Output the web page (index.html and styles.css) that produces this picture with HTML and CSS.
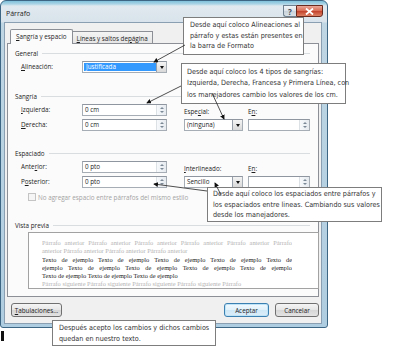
FILE: index.html
```html
<!DOCTYPE html>
<html lang="es">
<head>
  <meta charset="UTF-8">
  <title>Párrafo</title>
  <link rel="stylesheet" href="styles.css">
</head>
<body>
  <!-- Dialog window -->
  <div class="window">
    <div class="titlebar">
      <span class="title">Párrafo</span>
      <div class="caption-btns">
        <span class="cap-help">?</span>
        <span class="cap-close">
          <svg width="9" height="7" viewBox="0 0 9 7"><path d="M1 0.5 L8 6.5 M8 0.5 L1 6.5" stroke="#fff" stroke-width="1.8"/></svg>
        </span>
      </div>
    </div>

    <div class="client">
      <div class="tabs">
        <span class="tab active"><u>S</u>angría y espacio</span>
        <span class="tab"><u>L</u>íneas y saltos de <u>p</u>ágina</span>
      </div>

      <div class="panel">
        <div class="group-title">General</div>
        <div class="row">
          <span class="lbl"><u>A</u>lineación:</span>
          <div class="select wide">
            <span class="value selected">Justificada</span>
            <span class="drop"></span>
          </div>
        </div>

        <div class="group-title sp">Sangría</div>
        <div class="fields">
          <span class="lbl"><u>I</u>zquierda:</span>
          <div class="input"><span class="value">0 cm</span><span class="spin"><i class="up"></i><i class="down"></i></span></div>
          <span class="lbl c4 bottom">Espe<u>c</u>ial:</span>
          <span class="lbl c6 bottom">E<u>n</u>:</span>
          <span class="lbl"><u>D</u>erecha:</span>
          <div class="input"><span class="value">0 cm</span><span class="spin"><i class="up"></i><i class="down"></i></span></div>
          <div class="select c4"><span class="value">(ninguna)</span><span class="drop"></span></div>
          <div class="input c6"><span class="value"></span><span class="spin"><i class="up"></i><i class="down"></i></span></div>
        </div>

        <div class="group-title sp2">Espaciado</div>
        <div class="fields">
          <span class="lbl">Ante<u>r</u>ior:</span>
          <div class="input"><span class="value">0 pto</span><span class="spin"><i class="up"></i><i class="down"></i></span></div>
          <span class="lbl c4 bottom"><u>I</u>nterlineado:</span>
          <span class="lbl c6 bottom">E<u>n</u>:</span>
          <span class="lbl">P<u>o</u>sterior:</span>
          <div class="input"><span class="value">0 pto</span><span class="spin"><i class="up"></i><i class="down"></i></span></div>
          <div class="select c4"><span class="value">Sencillo</span><span class="drop"></span></div>
          <div class="input c6"><span class="value"></span><span class="spin"><i class="up"></i><i class="down"></i></span></div>
        </div>

        <div class="check-row">
          <span class="checkbox"></span>
          <span>No agregar espacio entre párrafos del mismo estilo</span>
        </div>

        <div class="group-title sp">Vista previa</div>
        <div class="preview">
          <div class="pv prev full">Párrafo anterior Párrafo anterior Párrafo anterior Párrafo anterior Párrafo anterior Párrafo</div>
          <div class="pv prev">anterior Párrafo anterior Párrafo anterior Párrafo anterior</div>
          <div class="pv sample full">Texto de ejemplo Texto de ejemplo Texto de ejemplo Texto de ejemplo Texto de</div>
          <div class="pv sample full">ejemplo Texto de ejemplo Texto de ejemplo Texto de ejemplo Texto de ejemplo</div>
          <div class="pv sample">Texto de ejemplo Texto de ejemplo Texto de ejemplo</div>
          <div class="pv prev">Párrafo siguiente Párrafo siguiente Párrafo siguiente Párrafo siguiente Párrafo</div>
        </div>
      </div>

      <div class="footer">
        <button class="btn btn-tabs"><u>T</u>abulaciones...</button>
        <div class="footer-right">
          <button class="btn btn-ok">Aceptar</button>
          <button class="btn btn-cancel">Cancelar</button>
        </div>
      </div>
    </div>
  </div>
  <div class="ink"></div>

  <!-- Annotations -->
  <div class="note note-1">Desde aquí coloco Alineaciones al<br>párrafo y estas están presentes en<br>la barra de Formato</div>
  <div class="note note-2">Desde aquí coloco los 4 tipos de sangrías:<br>Izquierda, Derecha, Francesa y Primera Línea, con<br>los manejadores cambio los valores de los cm.</div>
  <div class="note note-3">Desde aquí coloco los espaciados entre párrafos y<br>los espaciados entre lineas. Cambiando sus valores<br>desde los manejadores.</div>
  <div class="note note-4">Después acepto los cambios y dichos cambios<br>quedan en nuestro texto.</div>

  <svg class="arrows" width="400" height="350" viewBox="0 0 400 350">
    <defs>
      <marker id="head" viewBox="0 0 6 6" refX="5" refY="3" markerWidth="6" markerHeight="6" orient="auto">
        <path d="M0 0 L6 3 L0 6 Z" fill="#111"/>
      </marker>
    </defs>
    <g stroke="#222" stroke-width="0.8" fill="none" marker-end="url(#head)">
      <line x1="185" y1="45" x2="154" y2="62"/>
      <line x1="181" y1="86" x2="147" y2="103"/>
      <line x1="212" y1="93" x2="224" y2="119"/>
      <line x1="207" y1="191" x2="154" y2="184"/>
      <line x1="221" y1="195" x2="215" y2="183"/>
    </g>
  </svg>
</body>
</html>
```

FILE: styles.css
```css
* {
  box-sizing: border-box;
}

body {
  margin: 0;
  width: 400px;
  height: 350px;
  overflow: hidden;
  position: relative;
  background: #fff;
  font-family: 'Open Sans', sans-serif;
  font-size: 6.3px;
  color: #1e1e1e;
}

u {
  text-decoration-thickness: 0.5px;
  text-underline-offset: 1px;
}

/* Window frame */
.window {
  width: 328px;
  height: 328px;
  display: flex;
  flex-direction: column;
  padding: 0 5px 3px 3px;
  border: 1px solid #3d6685;
  border-radius: 6px 6px 3px 3px;
  background: linear-gradient(#7fc0da 0, #aad4e5 3px, #e1e9ef 5px, #d8e3eb 21px, #bfd6e4 22px, #afcde0 100%);
}

.titlebar {
  height: 21px;
  display: flex;
  justify-content: space-between;
  align-items: flex-start;
}

.title {
  padding: 8px 0 0 2px;
  font-size: 7px;
  line-height: 10px;
  color: #222;
}

.caption-btns {
  display: flex;
  margin: 4px -1px 0 0;
}

.cap-help {
  width: 13px;
  height: 12px;
  display: flex;
  align-items: center;
  justify-content: center;
  border: 1px solid #6f8190;
  border-right: none;
  border-radius: 0 0 0 3px;
  background: linear-gradient(#f3f6f8, #dbe2e8 50%, #c9d2da 51%, #d9e1e7);
  font-size: 8px;
  font-weight: bold;
  color: #3b4a57;
}

.cap-close {
  width: 27px;
  height: 12px;
  display: flex;
  align-items: center;
  justify-content: center;
  border: 1px solid #6b2a1e;
  border-radius: 0 0 3px 0;
  background: linear-gradient(#eaa898, #d86a52 50%, #c2402a 51%, #dc8264);
}

/* Client area */
.client {
  flex: 1;
  display: flex;
  flex-direction: column;
  padding: 6px 2px 0 2px;
  border: 1px solid #8aa0b2;
  background: #f0f0f0;
}

.tabs {
  height: 15px;
  margin-bottom: -1px;
  padding-left: 3px;
  display: flex;
  align-items: flex-end;
}

.tab {
  height: 13px;
  padding: 0 4px;
  display: flex;
  align-items: center;
  border: 1px solid #8c8f96;
  border-bottom: none;
  border-left: none;
  background: linear-gradient(#f4f4f4, #e4e4e4);
}

.tab.active {
  position: relative;
  z-index: 1;
  height: 15px;
  padding: 0 5px 1px;
  border-left: 1px solid #8c8f96;
  border-radius: 2px 2px 0 0;
  background: #fbfbfb;
}

.panel {
  padding: 0 5px 7px 7px;
  border: 1px solid #8c8f96;
  background: #fbfbfb;
}

.group-title {
  height: 10px;
  margin-top: 4px;
  display: flex;
  align-items: center;
}

.group-title::after {
  content: "";
  flex: 1;
  margin: 1px 3px 0 4px;
  border-top: 1px solid #dadde0;
}

.group-title.sp {
  margin-top: 18px;
}

.group-title.sp2 {
  margin-top: 17px;
}

.row {
  margin: 3px 0 0 6px;
  height: 12px;
  display: flex;
  align-items: center;
}

.lbl {
  line-height: 10px;
}

.row .lbl {
  width: 61px;
}

.fields {
  margin: 3px 0 0 6px;
  display: grid;
  grid-template-columns: 61px 85px 17px 59px 5px 62px;
  grid-template-rows: 12px 12px;
  row-gap: 3px;
  align-items: center;
}

.fields .c4 {
  grid-column: 4;
}

.fields .c6 {
  grid-column: 6;
}

.fields .lbl:nth-child(1),
.fields .lbl:nth-child(5) {
  grid-column: 1;
}

.fields .input:nth-child(2),
.fields .input:nth-child(6) {
  grid-column: 2;
}

.fields .bottom {
  align-self: end;
  margin-bottom: -1px;
}

/* Controls */
.select,
.input {
  height: 12px;
  display: flex;
  align-items: stretch;
  border: 1px solid #a7adb5;
  border-top-color: #8f969f;
  background: #fff;
}

.select.wide {
  width: 85px;
}

.value {
  flex: 1;
  padding-left: 2px;
  line-height: 10px;
  white-space: nowrap;
  overflow: hidden;
}

.value.selected {
  margin: 1px 0 1px 1px;
  padding-left: 2px;
  line-height: 8px;
  background: #3399ff;
  color: #fff;
}

.drop {
  width: 10px;
  margin: 0;
  border-left: 1px solid #97a0aa;
  background: linear-gradient(#f4f4f4, #d9d9d9);
  display: flex;
  align-items: center;
  justify-content: center;
}

.drop::after {
  content: "";
  border-left: 2.5px solid transparent;
  border-right: 2.5px solid transparent;
  border-top: 3px solid #111;
}

.spin {
  width: 10px;
  display: flex;
  flex-direction: column;
  align-items: center;
  justify-content: space-evenly;
  border-left: 1px solid #dce1e6;
  background: linear-gradient(90deg, #f7f9fb, #e6ebf0);
}

.spin i {
  display: block;
  border-left: 2px solid transparent;
  border-right: 2px solid transparent;
}

.spin .up {
  border-bottom: 2px solid #7b8896;
}

.spin .down {
  border-top: 2px solid #7b8896;
}

.check-row {
  height: 10px;
  margin: 4px 0 0 13px;
  display: flex;
  align-items: center;
  gap: 2px;
  color: #a3a3a3;
}

.checkbox {
  width: 8px;
  height: 8px;
  border: 1px solid #c4c4c4;
  background: #f5f5f5;
}

/* Preview box */
.preview {
  width: 291px;
  height: 57px;
  margin: 2px 0 0 13px;
  padding: 6px 0 0 13px;
  border: 1px solid #a2a2a2;
  background: #fff;
  font-family: 'Liberation Serif', serif;
  font-size: 6.4px;
  line-height: 8.3px;
}

.pv {
  white-space: nowrap;
}

.pv.full {
  width: 250px;
  text-align: justify;
  text-align-last: justify;
  white-space: normal;
  height: 8.3px;
  overflow: hidden;
}

.prev {
  color: #b4b4b4;
}

.sample {
  color: #222;
}

/* Footer buttons */
.footer {
  margin: 6px 0 0 4px;
  display: flex;
  justify-content: space-between;
}

.footer-right {
  display: flex;
  gap: 6px;
}

.btn {
  height: 14px;
  padding: 0;
  font-family: inherit;
  font-size: 6.3px;
  color: #1e1e1e;
  border: 1px solid #707070;
  border-radius: 3px;
  background: linear-gradient(#f5f5f5, #e6e6e6 50%, #d6d6d6 51%, #e3e3e3);
}

.btn-tabs {
  width: 51px;
}

.btn-ok {
  width: 45px;
  border-color: #3c7fb1;
  box-shadow: inset 0 0 0 1px #bfe4f8;
  background: linear-gradient(#f1f9fe, #e1f1fb 50%, #cfe8f7 51%, #dcedf8);
}

.btn-cancel {
  width: 44px;
}

.ink {
  width: 3px;
  height: 10px;
  margin: 3px 0 0 1px;
  background: #111;
}

/* Annotation call-outs */
.note {
  position: absolute;
  padding: 2px 0 0 6px;
  border: 1px solid #7d7d7d;
  background: #fff;
  font-family: 'Liberation Sans Narrow', 'DejaVu Sans Condensed', 'Liberation Sans', sans-serif;
  font-size: 7.2px;
  line-height: 10.5px;
  color: #333;
  white-space: nowrap;
}

.note-1 {
  left: 183px;
  top: 17px;
  width: 121px;
  height: 38px;
}

.note-2 {
  left: 181px;
  top: 63px;
  width: 165px;
  height: 41px;
  padding: 2px 0 0 5px;
  line-height: 11.3px;
}

.note-3 {
  left: 207px;
  top: 187px;
  width: 175px;
  height: 35px;
  padding: 1px 0 0 5px;
}

.note-4 {
  left: 52px;
  top: 320px;
  width: 164px;
  height: 26px;
  padding: 2px 0 0 6px;
}

.arrows {
  position: absolute;
  left: 0;
  top: 0;
  pointer-events: none;
}
```
